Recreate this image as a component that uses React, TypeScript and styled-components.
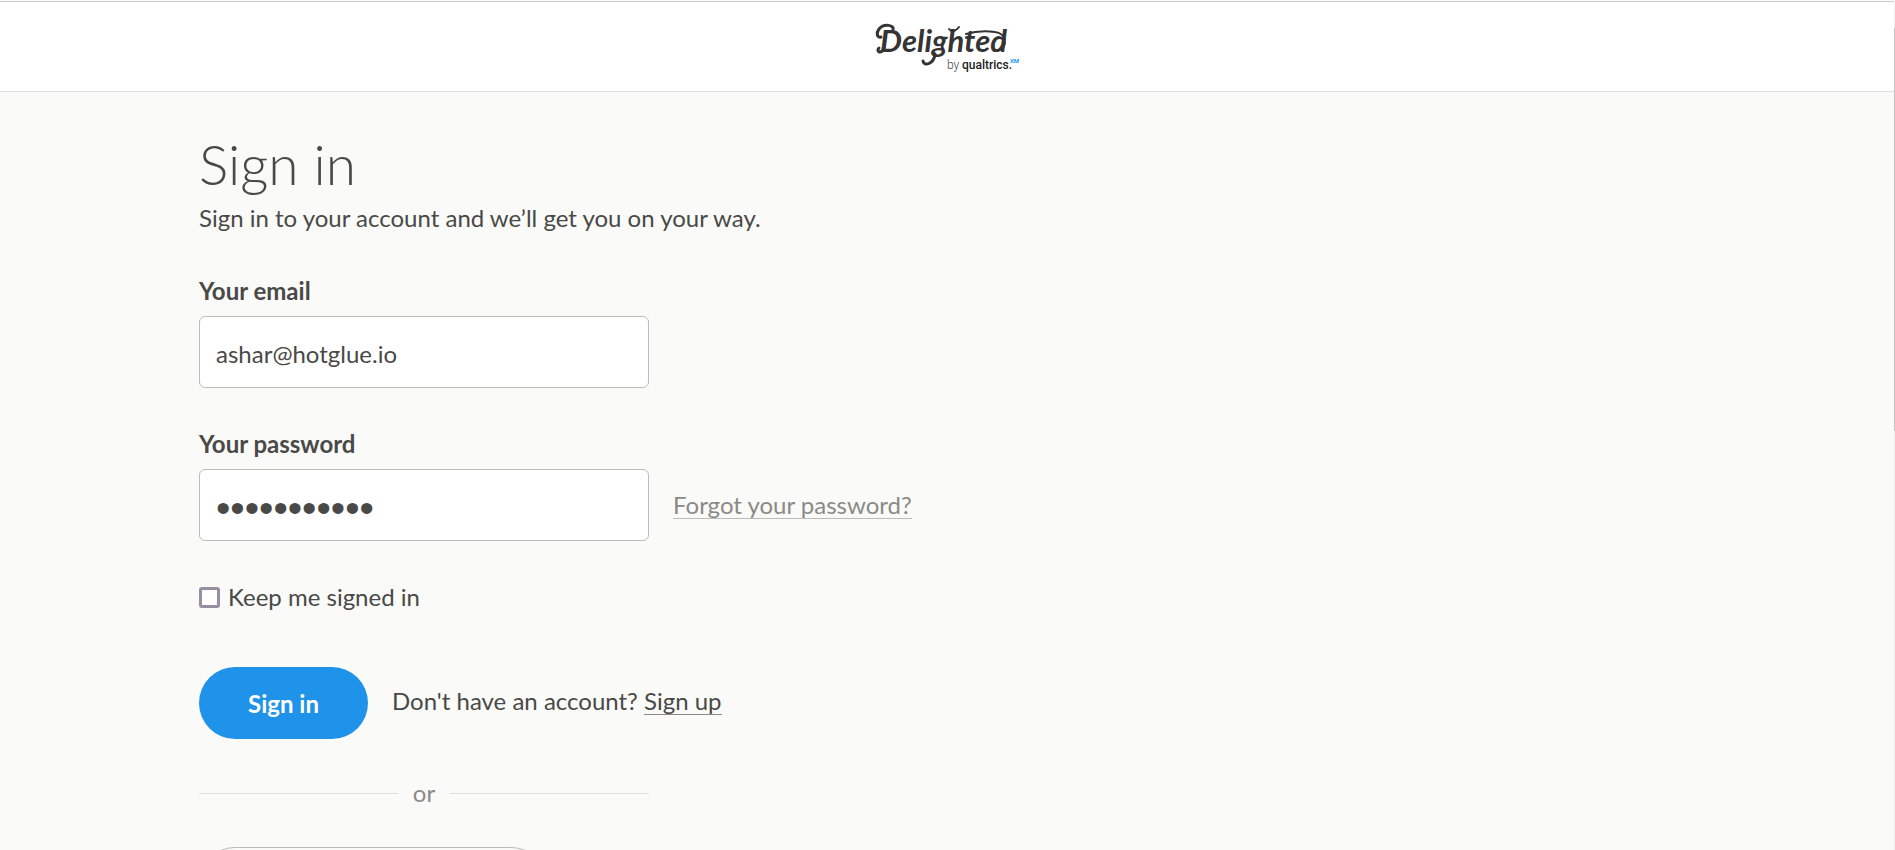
import React from "react";
import styled, { createGlobalStyle } from "styled-components";

const GlobalStyle = createGlobalStyle`
  *, *::before, *::after { box-sizing: border-box; }
  body {
    margin: 0;
    background: #fafaf8;
    color: #494947;
    font-family: Lato, "Open Sans", sans-serif;
    font-size: 24px;
    line-height: 32px;
  }
`;

const Page = styled.div`
  position: relative;
  height: 100vh;
  overflow: hidden;
  padding: 1px 1px 0 0;
`;

const Header = styled.header`
  display: flex;
  justify-content: center;
  height: 91px;
  padding-top: 16px;
  background: #fff;
  border-top: 1px solid #cbcbcb;
  border-bottom: 1px solid #dededc;
`;

const HomeLink = styled.a`
  display: block;
  height: 64px;
`;

const Main = styled.main`
  width: 79%;
  max-width: 1496px;
  margin: 0 auto;
  padding-top: 40px;
`;

const Title = styled.h1`
  margin: 0;
  font-size: 55px;
  font-weight: 300;
  line-height: 64px;
`;

const Intro = styled.p`
  margin: 6px 0 41px;
`;

const Field = styled.div`
  margin-bottom: 40px;
`;

const FieldLabel = styled.label`
  display: block;
  margin-bottom: 9px;
  font-weight: 700;
`;

const FieldRow = styled.div`
  display: flex;
  align-items: center;
  gap: 24px;
`;

const TextInput = styled.input`
  display: block;
  width: 450px;
  max-width: 100%;
  height: 72px;
  padding: 2px 16px 0;
  background: #fff;
  border: 1px solid #bcbcb6;
  border-radius: 6px;
  color: inherit;
  font: inherit;
  outline: none;

  &[type="password"] {
    padding-top: 6px;
    font-family: "Liberation Sans", sans-serif;
    font-size: 41px;
  }
`;

const TextLink = styled.a<{ $muted?: boolean }>`
  color: ${(p) => (p.$muted ? "#8a8a86" : "inherit")};
  border-bottom: 1px solid ${(p) => (p.$muted ? "#bcbcb6" : "#8a8a86")};
  line-height: 26px;
  display: inline-block;
  text-decoration: none;
`;

const KeepLabel = styled.label`
  display: flex;
  align-items: center;
  gap: 8px;
`;

const Checkbox = styled.input`
  appearance: none;
  width: 21px;
  height: 21px;
  margin: 0;
  background: #fff;
  border: 3px solid #9590a0;
  border-radius: 3px;
`;

const Actions = styled.div`
  display: flex;
  align-items: center;
  gap: 24px;
  margin-top: 54px;
`;

const SubmitButton = styled.button`
  min-width: 169px;
  height: 72px;
  padding: 2px 32px 0;
  background: #1f93e9;
  border: 0;
  border-radius: 36px;
  color: #fff;
  font: inherit;
  font-weight: 700;
`;

const Prompt = styled.p`
  margin: 0;
  padding-bottom: 4px;
`;

const Divider = styled.div`
  display: flex;
  align-items: center;
  width: 450px;
  max-width: 100%;
  margin-top: 38px;
  gap: 15px;
  color: #8a8a86;

  &::before,
  &::after {
    content: "";
    flex: 1;
    height: 1px;
    background: #dfdfd8;
  }
`;

const OutlineButton = styled.button`
  display: block;
  width: 348px;
  height: 72px;
  margin-top: 38px;
  background: #fafaf8;
  border: 1px solid #bcbcb6;
  border-radius: 36px;
`;

const ScrollTrack = styled.div`
  position: absolute;
  top: 2px;
  right: 0;
  bottom: 0;
  width: 1px;
  padding-top: 26px;
  background: #f0f0f0;
`;

const ScrollThumb = styled.div`
  height: 49%;
  background: #c4c4c4;
`;

function Logo() {
  return (
    <svg width="144" height="62" viewBox="0 0 144 62" role="img" aria-label="Delighted by qualtrics XM">
      <text x="5" y="34" fontFamily="Lato, sans-serif" fontSize="31" fontWeight="700" fontStyle="italic" fill="#343434">
        Delighted
      </text>
      <g fill="none" stroke="#343434" strokeWidth="3" strokeLinecap="round" strokeLinejoin="round">
        <path d="M18 12C20 7 9 5 4 11C1 15 2 20 6 19" />
        <path d="M8 32C5 36 1 33 4 30" />
        <path d="M74 11C77 15 81 13 84 9" strokeWidth="2" />
        <path d="M91 16C101 13 112 13 120 14C131 15 134 28 123 33" strokeWidth="2" />
        <path d="M60 36C59 46 49 49 48 43" />
      </g>
      <text x="72" y="51" fontFamily="Roboto, sans-serif" fontSize="12" fontWeight="300" fill="#444">
        by
      </text>
      <text x="87" y="51" fontFamily="Roboto, sans-serif" fontSize="12" fontWeight="500" fill="#222">
        qualtrics.
      </text>
      <text x="135" y="45" fontFamily="Roboto, sans-serif" fontSize="6" fontWeight="700" fill="#159cff">
        XM
      </text>
    </svg>
  );
}

export default function App() {
  return (
    <>
      <GlobalStyle />
      <Page>
        <Header>
          <HomeLink href="#">
            <Logo />
          </HomeLink>
        </Header>
        <Main>
          <Title>Sign in</Title>
          <Intro>Sign in to your account and we’ll get you on your way.</Intro>
          <form onSubmit={(e) => e.preventDefault()}>
            <Field>
              <FieldLabel htmlFor="email">Your email</FieldLabel>
              <TextInput id="email" type="email" defaultValue="ashar@hotglue.io" />
            </Field>
            <Field>
              <FieldLabel htmlFor="password">Your password</FieldLabel>
              <FieldRow>
                <TextInput id="password" type="password" defaultValue="hunter22abc" />
                <TextLink href="#" $muted>
                  Forgot your password?
                </TextLink>
              </FieldRow>
            </Field>
            <KeepLabel>
              <Checkbox type="checkbox" />
              Keep me signed in
            </KeepLabel>
            <Actions>
              <SubmitButton type="submit">Sign in</SubmitButton>
              <Prompt>
                Don't have an account? <TextLink href="#">Sign up</TextLink>
              </Prompt>
            </Actions>
          </form>
          <Divider>or</Divider>
          <OutlineButton type="button" />
        </Main>
        <ScrollTrack aria-hidden="true">
          <ScrollThumb />
        </ScrollTrack>
      </Page>
    </>
  );
}
